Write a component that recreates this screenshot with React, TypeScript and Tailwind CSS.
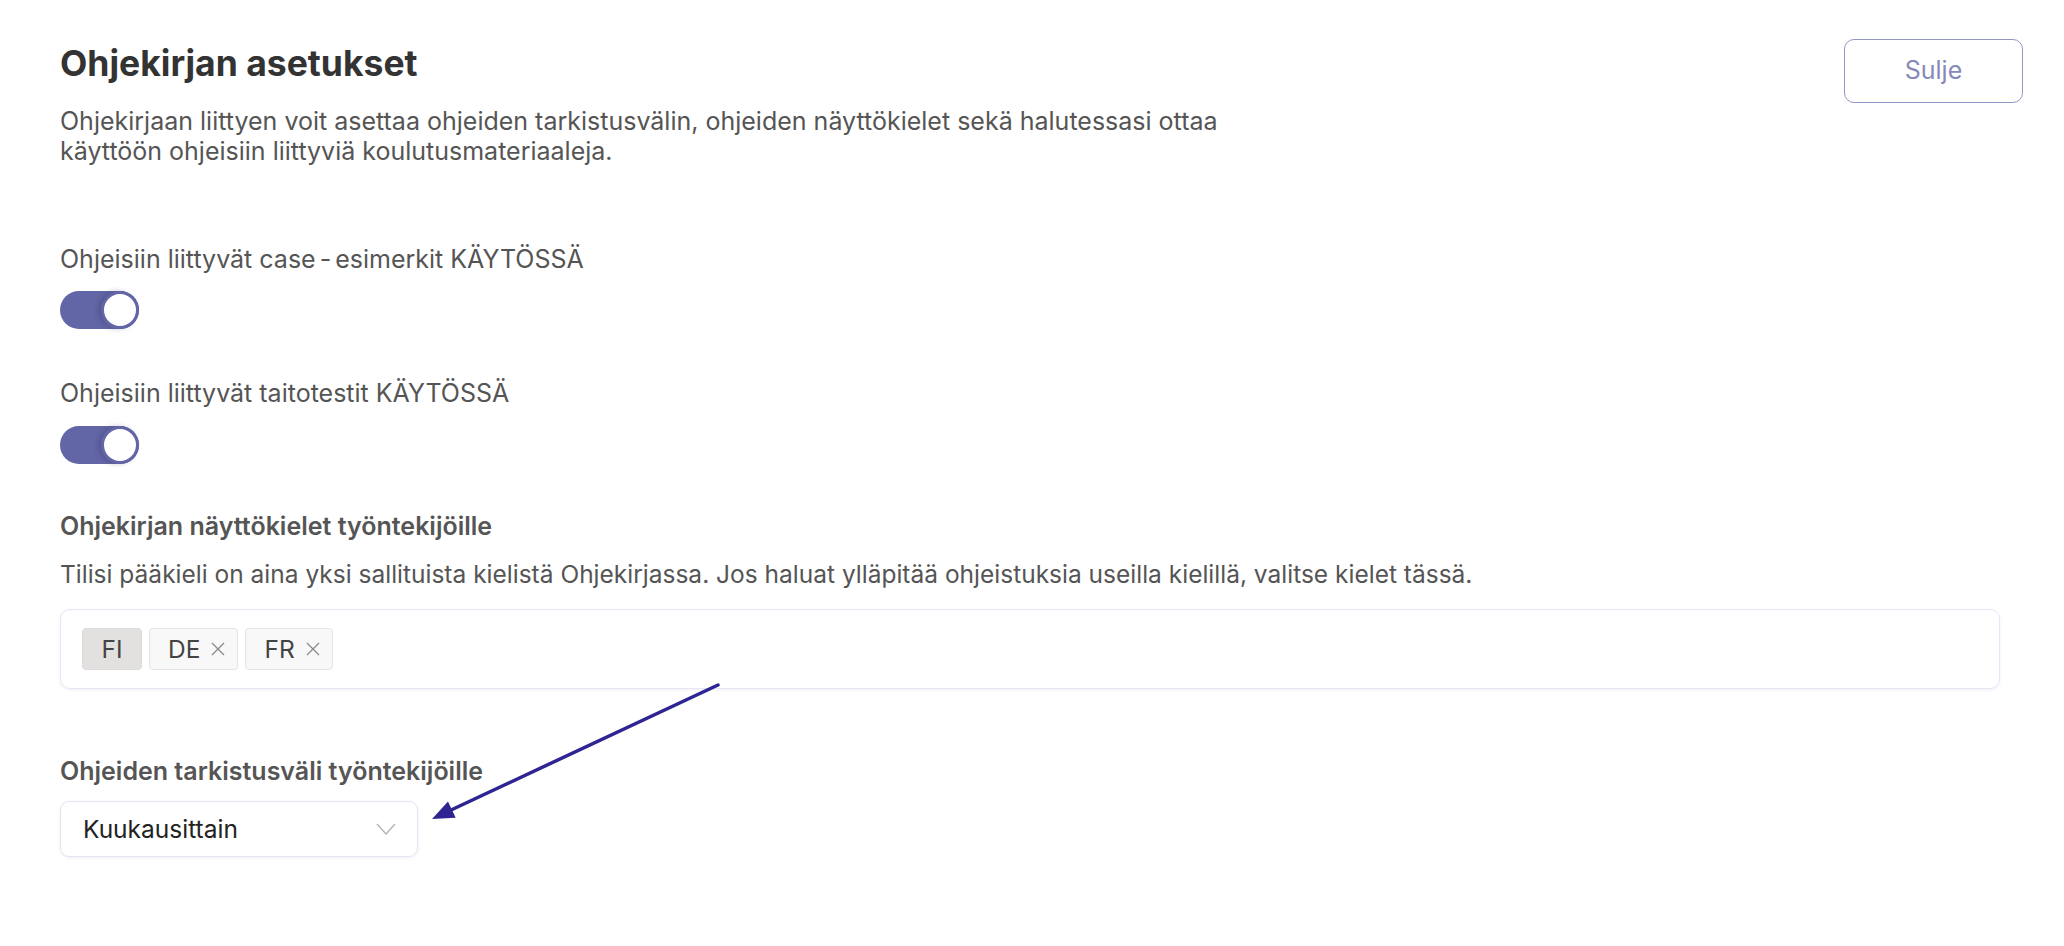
import { useState } from 'react';

const font = { fontFamily: 'Inter, "Noto Sans", sans-serif' };

function Toggle({ on, onChange }: { on: boolean; onChange: () => void }) {
  return (
    <button
      type="button"
      onClick={onChange}
      className={`relative w-[79px] h-[38px] rounded-full ${on ? 'bg-[#6266a6]' : 'bg-[#c9c9d6]'}`}
    >
      <span
        className={`absolute top-0 w-[38px] h-[38px] rounded-full bg-white border-[3px] shadow-[-3px_0_5px_rgba(40,40,90,0.25)] ${
          on ? 'right-0 border-[#6266a6]' : 'left-0 border-[#c9c9d6]'
        }`}
      />
    </button>
  );
}

function Tag({ label, removable }: { label: string; removable?: boolean }) {
  if (!removable) {
    return (
      <span className="flex items-center justify-center w-[60px] h-[42px] rounded-[4px] bg-[#e2e1e0] border border-[#dcdbda] text-[24.5px] text-[#444]">
        {label}
      </span>
    );
  }
  return (
    <span className="flex items-center gap-[11px] h-[42px] pl-[18px] pr-[12px] rounded-[4px] bg-[#f8f8f8] border border-[#e4e4e4] text-[24.5px] text-[#444]">
      {label}
      <svg width="14" height="14" viewBox="0 0 14 14" className="text-[#8a8a8a]">
        <path d="M1 1 13 13M13 1 1 13" stroke="currentColor" strokeWidth="1.3" fill="none" />
      </svg>
    </span>
  );
}

export default function App() {
  const [cases, setCases] = useState(true);
  const [tests, setTests] = useState(true);

  return (
    <div className="relative min-h-screen bg-white pl-[60px] pr-[41px] pt-[39px]" style={font}>
      <div className="flex items-start justify-between">
        <div className="pt-[5px]">
          <h1 className="text-[35.5px] leading-[40px] font-bold text-[#333]">Ohjekirjan asetukset</h1>
          <p className="mt-[22px] max-w-[1200px] text-[25px] leading-[30px] text-[#555]">
            Ohjekirjaan liittyen voit asettaa ohjeiden tarkistusvälin, ohjeiden näyttökielet sekä halutessasi ottaa
            käyttöön ohjeisiin liittyviä koulutusmateriaaleja.
          </p>
        </div>
        <button className="w-[179px] h-[64px] rounded-[10px] border border-[#9497c2] text-[25px] text-[#8589b8]">
          Sulje
        </button>
      </div>

      <div className="w-[1940px]">
        <p className="mt-[78px] text-[25px] leading-[30px] text-[#555]">
          Ohjeisiin liittyvät case<span className="mx-[4px]">-</span>esimerkit KÄYTÖSSÄ
        </p>
        <div className="mt-[17px] flex">
          <Toggle on={cases} onChange={() => setCases(!cases)} />
        </div>

        <p className="mt-[49px] text-[25px] leading-[30px] text-[#555]">Ohjeisiin liittyvät taitotestit KÄYTÖSSÄ</p>
        <div className="mt-[18px] flex">
          <Toggle on={tests} onChange={() => setTests(!tests)} />
        </div>

        <h2 className="mt-[47px] text-[25px] leading-[30px] font-semibold text-[#555]">
          Ohjekirjan näyttökielet työntekijöille
        </h2>
        <p className="mt-[18px] text-[24.5px] leading-[30px] text-[#555]">
          Tilisi pääkieli on aina yksi sallituista kielistä Ohjekirjassa. Jos haluat ylläpitää ohjeistuksia useilla
          kielillä, valitse kielet tässä.
        </p>
        <div className="mt-[20px] h-[80px] flex items-center gap-[7px] px-[21px] rounded-[10px] border border-[#e6e6f6] shadow-[0_1px_3px_rgba(120,120,180,0.12)]">
          <Tag label="FI" />
          <Tag label="DE" removable />
          <Tag label="FR" removable />
        </div>

        <h2 className="mt-[67px] text-[25px] leading-[30px] font-semibold text-[#555]">
          Ohjeiden tarkistusväli työntekijöille
        </h2>
        <div className="mt-[15px] w-[358px] h-[56px] flex items-center justify-between pl-[22px] pr-[21px] rounded-[9px] border border-[#e4e4f3] shadow-[0_1px_3px_rgba(120,120,180,0.12)]">
          <span className="text-[24.5px] text-[#222]">Kuukausittain</span>
          <svg width="20" height="12" viewBox="0 0 20 12">
            <polyline points="1,1 10,11 19,1" fill="none" stroke="#b3b3b3" strokeWidth="1.3" />
          </svg>
        </div>
      </div>

      <svg
        className="absolute left-[420px] top-[675px] pointer-events-none"
        width="310"
        height="155"
        viewBox="0 0 310 155"
      >
        <line x1="298" y1="10" x2="30" y2="135.5" stroke="#2e2592" strokeWidth="3.5" strokeLinecap="round" />
        <polygon points="12,144 28,126.6 35.7,142.8" fill="#2e2592" />
      </svg>
    </div>
  );
}
